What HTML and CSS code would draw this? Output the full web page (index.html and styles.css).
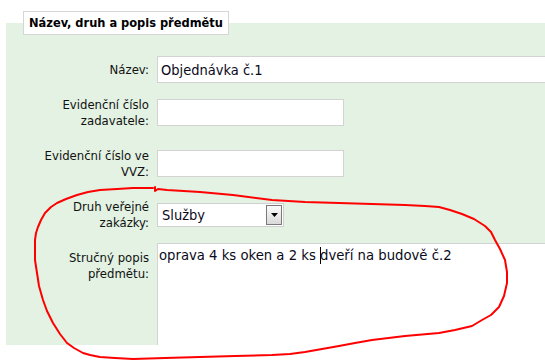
FILE: index.html
```html
<!DOCTYPE html>
<html lang="cs">
<head>
<meta charset="utf-8">
<title>Název, druh a popis předmětu</title>
<link rel="stylesheet" href="styles.css">
</head>
<body>
<div class="page">
  <fieldset class="panel">
    <legend class="panel-title">Název, druh a popis předmětu</legend>
    <div class="form">
      <label class="lbl" for="nazev">Název:</label>
      <div class="ctl"><input id="nazev" class="field field-wide" type="text" value="Objednávka č.1"></div>

      <label class="lbl" for="evz">Evidenční číslo zadavatele:</label>
      <div class="ctl"><input id="evz" class="field field-short" type="text" value=""></div>

      <label class="lbl" for="evv">Evidenční číslo ve VVZ:</label>
      <div class="ctl"><input id="evv" class="field field-short" type="text" value=""></div>

      <label class="lbl" for="druh">Druh veřejné zakázky:</label>
      <div class="ctl">
        <div class="select">
          <select id="druh" class="select-input"><option>Služby</option></select>
          <span class="select-btn"><svg width="7" height="4" viewBox="0 0 7 4"><path d="M0 0H7L3.5 4Z" fill="#000"/></svg></span>
        </div>
      </div>

      <label class="lbl lbl-top">Stručný popis předmětu:</label>
      <div class="ctl ctl-top">
        <div class="textarea">oprava 4 ks oken a 2 ks <span class="caret"></span>dveří na budově č.2</div>
      </div>
    </div>
  </fieldset>
  <svg class="scribble" width="545" height="361" viewBox="0 0 545 361">
    <path d="M155,187 L155,191 L158,189 L167,190 L200,192 L233,195 L272,200 L305,202 L339,203 L372,204 L405,205 L425,206 L439,207 L450,210 L462,214 L474,219 L485,226 L491,232 L495,240 L500,249 L505,260 L507,272 L507,283 L504,296 L499,307 L491,315 L482,320 L472,326 L455,330 L439,333 L405,336 L372,340 L355,343 L339,346 L322,349 L305,352 L290,354 L272,355 L235,356 L200,357 L165,358 L133,359 L115,358 L100,357 L90,355 L83,353 L74,348 L67,343 L60,334 L53,323 L47,311 L43,300 L39,286 L37,273 L35,260 L35,250 L35,240 L36,233 L38,227 L41,220 L45,213 L51,207 L57,203 L66,199 L77,195 L88,192 L100,190 L117,189 L133,188 L153,188"
      fill="none" stroke="#ff0000" stroke-width="2" stroke-linejoin="round" stroke-linecap="round"/>
  </svg>
</div>
</body>
</html>
```
FILE: styles.css
```css
html, body {
  margin: 0;
  padding: 0;
  overflow: hidden;
  background: #ffffff;
}

.page {
  position: relative;
  width: 545px;
  height: 361px;
  overflow: hidden;
  font-family: "DejaVu Sans", "Liberation Sans", sans-serif;
  font-stretch: condensed;
  color: #1c1c1c;
}

.panel {
  margin: 11px 0 0 6px;
  padding: 17px 0 0 17px;
  border: none;
  background: #e3f2e3;
  min-width: 0;
  overflow: hidden;
}

.panel-title {
  padding: 4px 5px 5px 5px;
  background: #ffffff;
  border: 1px solid #d6d6d6;
  font-size: 12.7px;
  font-weight: bold;
  line-height: 13px;
  color: #000;
}

.form {
  display: grid;
  grid-template-columns: 126px 1fr;
  column-gap: 8px;
  align-items: center;
}

.lbl {
  text-align: right;
  font-size: 13px;
  line-height: 16px;
  padding: 10px 0 9px 0;
  color: #111;
}

.lbl-top {
  align-self: start;
}

.ctl {
  display: flex;
  min-width: 0;
}

.ctl-top {
  align-self: start;
  padding-top: 3px;
}

.field {
  box-sizing: border-box;
  height: 27px;
  border: 1px solid #d3d3d3;
  background: #fff;
  padding: 0 3px;
  font-family: inherit;
  font-stretch: condensed;
  font-size: 14.5px;
  color: #0a0a1a;
  outline: none;
}

.field-wide {
  width: 420px;
  flex: none;
}

.field-short {
  width: 187px;
}

.select {
  box-sizing: border-box;
  width: 127px;
  height: 24px;
  display: flex;
  border: 1px solid #d0d0d0;
  background: #fff;
  padding: 1px 1px 1px 0;
}

.select-input {
  appearance: none;
  -webkit-appearance: none;
  border: none;
  background: transparent;
  flex: 1;
  min-width: 0;
  padding: 0 0 0 4px;
  font-family: inherit;
  font-stretch: condensed;
  font-size: 14.5px;
  color: #0a0a1a;
  outline: none;
}

.select-btn {
  box-sizing: border-box;
  width: 16px;
  display: flex;
  align-items: center;
  justify-content: center;
  border: 1px solid #7a7a7a;
  background: linear-gradient(#fbfbfb, #d9d9d9);
}

.textarea {
  box-sizing: border-box;
  width: 420px;
  flex: none;
  height: 102px;
  border: 1px solid #d3d3d3;
  border-bottom: none;
  background: #fff;
  padding: 2px 1px;
  font-size: 14.7px;
  line-height: 18px;
  color: #0a0a1a;
  white-space: nowrap;
}

.caret {
  display: inline-block;
  width: 1px;
  height: 17px;
  margin-right: -1px;
  background: #000;
  vertical-align: -4px;
}

.scribble {
  position: absolute;
  left: 0;
  top: 0;
  pointer-events: none;
}
```
